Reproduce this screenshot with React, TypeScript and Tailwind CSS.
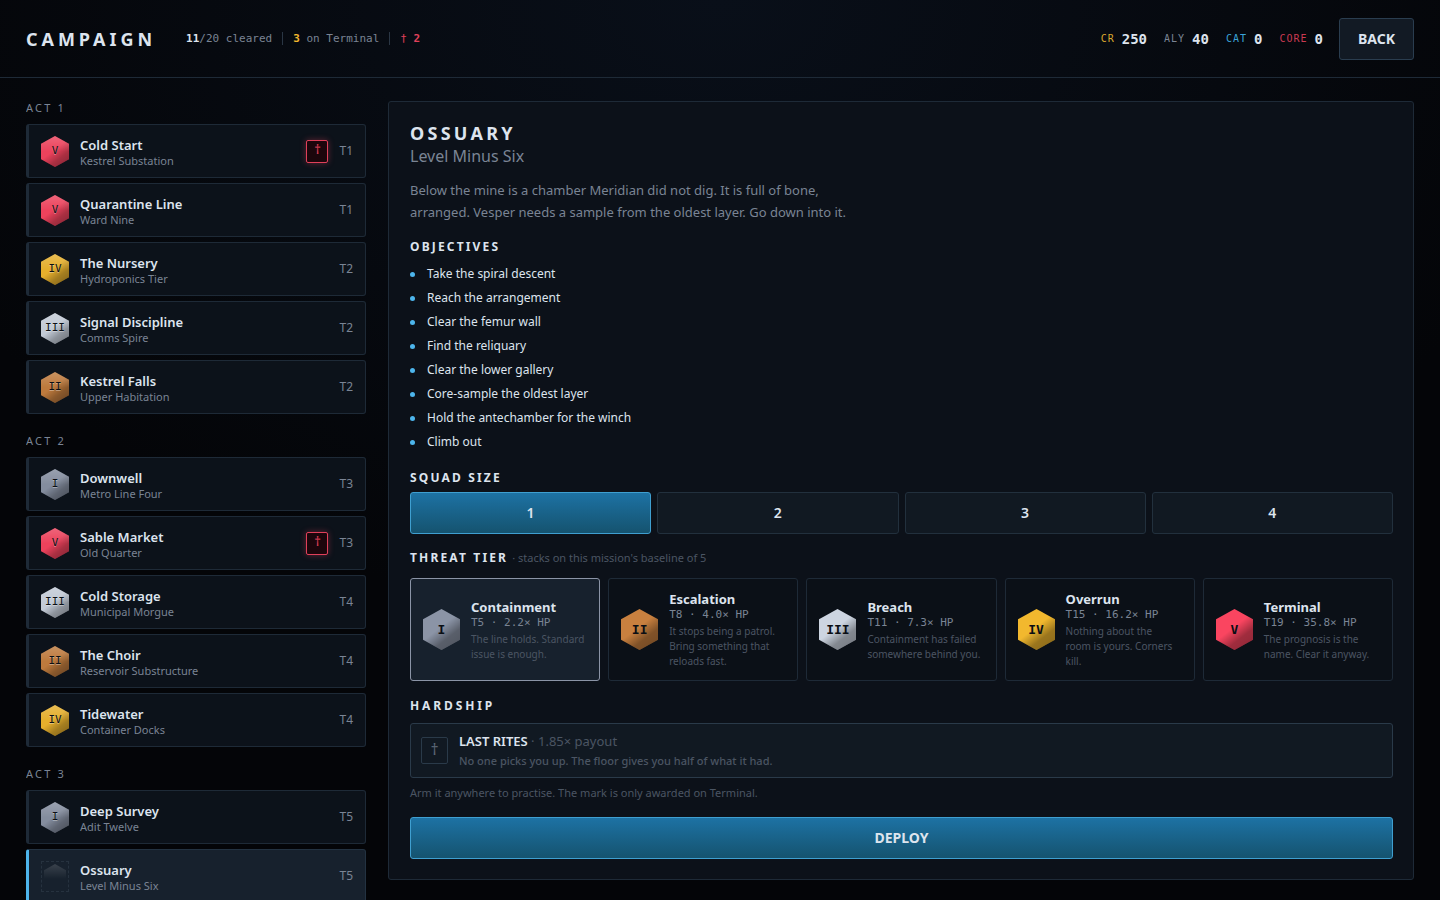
import { ReactNode, useState } from "react";

type Grade = "I" | "II" | "III" | "IV" | "V";

interface Mission {
    name: string;
    place: string;
    tier: string;
    grade?: Grade;
    marked?: boolean;
}

const GRADE_COLORS: Record<Grade, string> = {
    I: "#8b94a6",
    II: "#c8803f",
    III: "#cdd5e1",
    IV: "#f2b82e",
    V: "#fa4560",
};

const ACTS: { title: string; missions: Mission[] }[] = [
    {
        title: "Act 1",
        missions: [
            { name: "Cold Start", place: "Kestrel Substation", tier: "T1", grade: "V", marked: true },
            { name: "Quarantine Line", place: "Ward Nine", tier: "T1", grade: "V" },
            { name: "The Nursery", place: "Hydroponics Tier", tier: "T2", grade: "IV" },
            { name: "Signal Discipline", place: "Comms Spire", tier: "T2", grade: "III" },
            { name: "Kestrel Falls", place: "Upper Habitation", tier: "T2", grade: "II" },
        ],
    },
    {
        title: "Act 2",
        missions: [
            { name: "Downwell", place: "Metro Line Four", tier: "T3", grade: "I" },
            { name: "Sable Market", place: "Old Quarter", tier: "T3", grade: "V", marked: true },
            { name: "Cold Storage", place: "Municipal Morgue", tier: "T4", grade: "III" },
            { name: "The Choir", place: "Reservoir Substructure", tier: "T4", grade: "II" },
            { name: "Tidewater", place: "Container Docks", tier: "T4", grade: "IV" },
        ],
    },
    {
        title: "Act 3",
        missions: [
            { name: "Deep Survey", place: "Adit Twelve", tier: "T5", grade: "I" },
            { name: "Ossuary", place: "Level Minus Six", tier: "T5" },
        ],
    },
];

const OBJECTIVES = [
    "Take the spiral descent",
    "Reach the arrangement",
    "Clear the femur wall",
    "Find the reliquary",
    "Clear the lower gallery",
    "Core-sample the oldest layer",
    "Hold the antechamber for the winch",
    "Climb out",
];

const TIERS: { grade: Grade; name: string; stats: string; text: string }[] = [
    { grade: "I", name: "Containment", stats: "T5 · 2.2× HP", text: "The line holds. Standard issue is enough." },
    { grade: "II", name: "Escalation", stats: "T8 · 4.0× HP", text: "It stops being a patrol. Bring something that reloads fast." },
    { grade: "III", name: "Breach", stats: "T11 · 7.3× HP", text: "Containment has failed somewhere behind you." },
    { grade: "IV", name: "Overrun", stats: "T15 · 16.2× HP", text: "Nothing about the room\u00a0is yours. Corners kill." },
    { grade: "V", name: "Terminal", stats: "T19 · 35.8× HP", text: "The prognosis is the name. Clear it anyway." },
];

const WALLET = [
    { label: "CR", value: 250, color: "text-[#d9a72f]" },
    { label: "ALY", value: 40, color: "text-[#7b8494]" },
    { label: "CAT", value: 0, color: "text-[#3ba3d8]" },
    { label: "CORE", value: 0, color: "text-[#c93a52]" },
];

const MONO = "font-['DejaVu_Sans_Mono',monospace]";

function HexBadge({ grade, large }: { grade: Grade; large?: boolean }) {
    const id = `hex-${grade}-${large ? "lg" : "sm"}`;
    return (
        <span className={large ? "relative block h-[41px] w-[37px] shrink-0" : "relative block h-[31px] w-[28px] shrink-0"}>
            <svg viewBox="0 0 28 31" preserveAspectRatio="none" className="block h-full w-full" aria-hidden="true">
                <defs>
                    <linearGradient id={`${id}-shade`} x1="0.15" y1="0" x2="0.85" y2="1">
                        <stop offset="0.45" stopColor="#000" stopOpacity="0" />
                        <stop offset="0.72" stopColor="#000" stopOpacity={large ? 0.36 : 0.28} />
                        <stop offset="1" stopColor="#000" stopOpacity="0.42" />
                    </linearGradient>
                    <linearGradient id={`${id}-shine`} x1="0" y1="0" x2="0" y2="1">
                        <stop offset="0" stopColor="#fff" stopOpacity="0.2" />
                        <stop offset="0.5" stopColor="#fff" stopOpacity="0" />
                    </linearGradient>
                </defs>
                <g opacity={large ? 1 : 0.95}>
                    <path d="M14 0 28 7.75V23.25L14 31 0 23.25V7.75Z" fill={GRADE_COLORS[grade]} />
                    <path d="M14 0 28 7.75V23.25L14 31 0 23.25V7.75Z" fill={`url(#${id}-shade)`} />
                    {!large && <path d="M14 0 28 7.75V23.25L14 31 0 23.25V7.75Z" fill={`url(#${id}-shine)`} />}
                </g>
            </svg>
            <span
                className={`absolute inset-0 flex items-center justify-center text-[#0a0e14] ${MONO} ${
                    large ? "text-[13px] font-bold" : "text-[11px] [text-shadow:0_1px_0_rgba(255,255,255,0.35)]"
                }`}
            >
                {grade}
            </span>
        </span>
    );
}

function EmptyBadge() {
    return (
        <span className="block h-[31px] w-[28px] shrink-0 border border-dashed border-[#26323f] p-[2px]">
            <svg viewBox="0 0 22 25" className="block h-full w-full" aria-hidden="true">
                <defs>
                    <linearGradient id="hex-empty" x1="0" y1="0" x2="0" y2="1">
                        <stop offset="0" stopColor="#fff" stopOpacity="0.15" />
                        <stop offset="0.6" stopColor="#fff" stopOpacity="0" />
                    </linearGradient>
                </defs>
                <path d="M11 0 22 6.25V18.75L11 25 0 18.75V6.25Z" fill="url(#hex-empty)" />
            </svg>
        </span>
    );
}

function MissionRow({ mission, active, onSelect }: { mission: Mission; active: boolean; onSelect: () => void }) {
    return (
        <button
            type="button"
            onClick={onSelect}
            className={`flex h-[54px] w-full shrink-0 items-center rounded-[3px] border border-l-[3px] px-3 text-left ${
                active ? "border-[#233241] border-l-[#4db5ec] bg-[#17212d]" : "border-[#1e2a37] bg-[#0c121a]"
            }`}
        >
            {mission.grade ? <HexBadge grade={mission.grade} /> : <EmptyBadge />}
            <span className="ml-[11px] flex-1 pt-1">
                <span className="block text-[13px] leading-4 font-semibold text-[#dde4ee]">{mission.name}</span>
                <span className="block text-[11px] leading-4 text-[#7a8494]">{mission.place}</span>
            </span>
            {mission.marked && (
                <span className="mr-[11px] flex h-[23px] w-[22px] items-center justify-center rounded-[2px] border border-[#e0405a] bg-[#1c060c] pb-[3px] text-[13px] leading-none text-[#e0405a] shadow-[0_0_6px_rgba(224,64,90,0.4)]">
                    †
                </span>
            )}
            <span className="text-xs text-[#7a8494]">{mission.tier}</span>
        </button>
    );
}

function Heading({ children, wide }: { children: ReactNode; wide?: boolean }) {
    return (
        <h3 className={`text-xs leading-4 font-bold text-[#dde4ee] uppercase ${wide ? "tracking-[0.24em]" : "tracking-[0.18em]"}`}>
            {children}
        </h3>
    );
}

export default function App() {
    const [selected, setSelected] = useState("Ossuary");
    const [squad, setSquad] = useState(1);
    const [tier, setTier] = useState<Grade>("I");

    return (
        <div className="flex h-screen flex-col overflow-hidden bg-[#040508] bg-[radial-gradient(ellipse_60%_70%_at_50%_0%,#090f19,#040508)] font-['Noto_Sans',sans-serif] text-[#dde4ee]">
            <header className="flex h-[78px] shrink-0 items-center border-b border-[#1e2a37] px-[26px]">
                <h1 className="text-lg font-bold tracking-[0.22em]">CAMPAIGN</h1>
                <div className={`ml-[30px] flex items-center text-[11px] leading-[13px] text-[#7a8494] ${MONO}`}>
                    <span className="border-r border-[#2a3644] pr-[10px]">
                        <b className="text-[#dde4ee]">11</b>/20 cleared
                    </span>
                    <span className="border-r border-[#2a3644] px-[10px]">
                        <b className="text-[#f2b82e]">3</b> on Terminal
                    </span>
                    <span className="pl-[10px] text-[#e0405a]">
                        † <b>2</b>
                    </span>
                </div>
                <div className={`ml-auto flex items-center gap-[17px] ${MONO}`}>
                    {WALLET.map((item) => (
                        <span key={item.label} className="flex items-center gap-[7px]">
                            <span className={`text-[10px] tracking-[0.1em] ${item.color}`}>{item.label}</span>
                            <b className="text-sm">{item.value}</b>
                        </span>
                    ))}
                </div>
                <button type="button" className="ml-4 h-[42px] rounded-[3px] border border-[#2a3d4f] bg-[#121a24] px-[18px] text-sm font-bold">
                    BACK
                </button>
            </header>

            <main className="grid min-h-0 flex-1 grid-cols-[340px_1fr] gap-[22px] px-[26px] pt-[23px] pb-5">
                <nav className="-mb-5 flex flex-col gap-5 overflow-hidden">
                    {ACTS.map((act) => (
                        <section key={act.title} className="flex shrink-0 flex-col gap-[5px]">
                            <h2 className="mb-1 text-[11px] leading-[14px] tracking-[0.2em] text-[#7a8494] uppercase">{act.title}</h2>
                            {act.missions.map((mission) => (
                                <MissionRow
                                    key={mission.name}
                                    mission={mission}
                                    active={mission.name === selected}
                                    onSelect={() => setSelected(mission.name)}
                                />
                            ))}
                        </section>
                    ))}
                </nav>

                <article className="flex flex-col rounded-[3px] border border-[#1e2a37] bg-[#0c1119] pt-5 pr-5 pl-[21px]">
                    <h2 className="text-lg leading-[22px] font-bold tracking-[0.18em]">OSSUARY</h2>
                    <p className="text-base leading-6 text-[#7a8494]">Level Minus Six</p>
                    <p className="mt-[11px] max-w-[440px] text-[13px] leading-[22px] text-[#7a8494]">
                        Below the mine is a chamber Meridian did not dig. It is full of bone, arranged. Vesper needs a sample from the oldest layer. Go down into it.
                    </p>

                    <div className="mt-4">
                        <Heading>Objectives</Heading>
                    </div>
                    <ul className="mt-[7px] text-xs leading-6">
                        {OBJECTIVES.map((objective) => (
                            <li key={objective} className="flex items-center gap-3">
                                <span className="size-[5px] rounded-full bg-[#4db5ec]" />
                                {objective}
                            </li>
                        ))}
                    </ul>

                    <div className="mt-4">
                        <Heading>Squad size</Heading>
                    </div>
                    <div className="mt-[6px] grid grid-cols-4 gap-[6px]">
                        {[1, 2, 3, 4].map((size) => (
                            <button
                                key={size}
                                type="button"
                                onClick={() => setSquad(size)}
                                className={`h-[42px] rounded-[3px] border text-sm font-semibold ${
                                    size === squad
                                        ? "border-[#3f9fd0] bg-linear-to-b from-[#1d72a4] to-[#15536f]"
                                        : "border-[#22303d] bg-[#111922]"
                                }`}
                            >
                                {size}
                            </button>
                        ))}
                    </div>

                    <div className="mt-4 flex items-center gap-1">
                        <Heading>Threat tier</Heading>
                        <span className="text-[11px] leading-4 text-[#4b5563]">· stacks on this mission's baseline of 5</span>
                    </div>
                    <div className="mt-3 grid grid-cols-5 gap-2">
                        {TIERS.map((item) => (
                            <button
                                key={item.grade}
                                type="button"
                                onClick={() => setTier(item.grade)}
                                className={`flex h-[103px] items-center gap-[11px] rounded-[3px] border pr-2 pl-3 text-left ${
                                    item.grade === tier ? "border-[#8b94a6] bg-[#17212d]" : "border-[#1e2a37] bg-[#0b1017]"
                                }`}
                            >
                                <HexBadge grade={item.grade} large />
                                <span className="flex-1">
                                    <span className="block text-[13px] leading-[18px] font-bold">{item.name}</span>
                                    <span className={`block text-[11px] leading-[14px] text-[#7a8494] ${MONO}`}>{item.stats}</span>
                                    <span className="block pt-[2px] text-[10px] leading-[15px] text-[#4b5563]">{item.text}</span>
                                </span>
                            </button>
                        ))}
                    </div>

                    <div className="mt-[17px]">
                        <Heading wide>Hardship</Heading>
                    </div>
                    <button
                        type="button"
                        className="mt-[9px] flex h-[55px] items-center gap-[11px] rounded-[3px] border border-[#2a3a49] bg-[#111922] px-[10px] text-left"
                    >
                        <span className="flex size-[27px] items-center justify-center rounded-[2px] border border-[#2a3a49] pb-1 text-base leading-none text-[#5b6675]">†</span>
                        <span>
                            <span className="block text-[13px] leading-5 text-[#4b5563]">
                                <b className="font-semibold text-[#dde4ee]">LAST RITES</b> · 1.85× payout
                            </span>
                            <span className="block text-[11px] leading-5 font-medium text-[#4b5563]">No one picks you up. The floor gives you half of what it had.</span>
                        </span>
                    </button>
                    <p className="mt-[7px] text-[11px] leading-4 text-[#4b5563]">Arm it anywhere to practise. The mark is only awarded on Terminal.</p>
                    <button
                        type="button"
                        className="mt-4 h-[42px] rounded-[3px] border border-[#3f9fd0] bg-linear-to-b from-[#1d72a4] to-[#15536f] text-sm font-bold"
                    >
                        DEPLOY
                    </button>
                </article>
            </main>
        </div>
    );
}
